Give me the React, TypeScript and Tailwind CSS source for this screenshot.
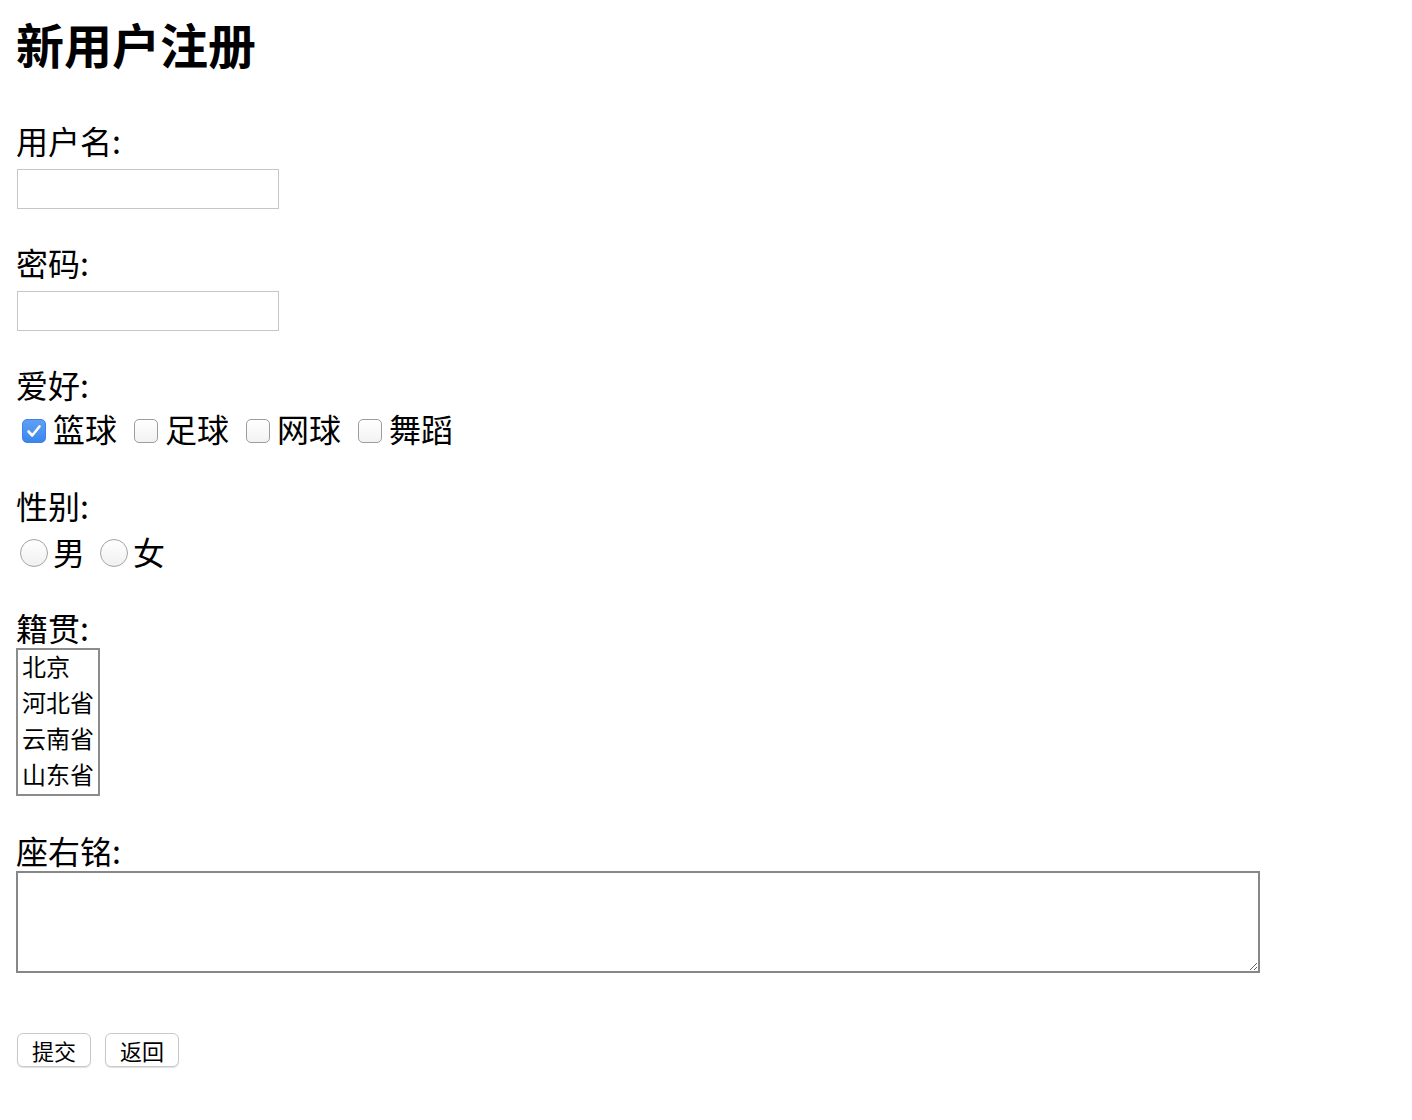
import { useState } from 'react'

const font = { fontFamily: '"Noto Sans CJK SC", "Noto Sans", sans-serif' }

const hobbies = [
  { id: 'lanqiu', label: '篮球' },
  { id: 'zuqiu', label: '足球' },
  { id: 'wangqiu', label: '网球' },
  { id: 'wudao', label: '舞蹈' },
]

const provinces = ['北京', '河北省', '云南省', '山东省']

const Label = ({ text, className = '' }: { text: string; className?: string }) => (
  <div className={`text-[32px] leading-[32px] text-black ${className}`}>{text}</div>
)

const App = () => {
  const [checked, setChecked] = useState<Record<string, boolean>>({ lanqiu: true })
  const [gender, setGender] = useState('')

  return (
    <div className="min-h-screen bg-white px-[16px] pt-[19px] text-black" style={font}>
      <h1 className="text-[48px] leading-[48px] font-bold">新用户注册</h1>

      <form className="flex flex-col items-start" onSubmit={e => e.preventDefault()}>
        {/* 用户名 */}
        <Label text="用户名:" className="mt-[57px]" />
        <input type="text" className="mt-[13px] ml-px h-[40px] w-[262px] border border-[#c6c6c6] bg-white px-2 text-[24px] outline-none" />

        {/* 密码 */}
        <Label text="密码:" className="mt-[37px]" />
        <input type="password" className="mt-[13px] ml-px h-[40px] w-[262px] border border-[#c6c6c6] bg-white px-2 text-[24px] outline-none" />

        {/* 爱好 */}
        <Label text="爱好:" className="mt-[37px]" />
        <div className="mt-[12px] flex items-center text-[32px] leading-[32px]">
          {hobbies.map((h, i) => (
            <label key={h.id} className={`flex items-center gap-[7px] ${i === 0 ? 'ml-[6px]' : 'ml-[17px]'}`}>
              <span className="relative mt-[6px] flex h-[24px] w-[24px]">
                <input
                  type="checkbox"
                  checked={!!checked[h.id]}
                  onChange={() => setChecked({ ...checked, [h.id]: !checked[h.id] })}
                  className="h-[24px] w-[24px] appearance-none rounded-[5px] border border-[#9d9d9d] bg-gradient-to-b from-white to-[#f2f2f2] checked:border-[#3d82e6] checked:from-[#5fa0f3] checked:to-[#3a86ee]"
                />
                {checked[h.id] && (
                  <svg className="pointer-events-none absolute left-0 top-0" width="24" height="24" viewBox="0 0 24 24">
                    <path d="M6.5 12.5 L10.2 16.5 L17.5 7.5" fill="none" stroke="white" strokeWidth="2.6" strokeLinecap="round" strokeLinejoin="round" />
                  </svg>
                )}
              </span>
              <span>{h.label}</span>
            </label>
          ))}
        </div>

        {/* 性别 */}
        <Label text="性别:" className="mt-[45px]" />
        <div className="mt-[13px] flex items-center text-[32px] leading-[32px]">
          {['男', '女'].map((g, i) => (
            <label key={g} className={`flex items-center gap-[5px] ${i === 0 ? 'ml-[4px]' : 'ml-[15px]'}`}>
              <input
                type="radio"
                name="gender"
                checked={gender === g}
                onChange={() => setGender(g)}
                className="mt-[5px] h-[28px] w-[28px] appearance-none rounded-full border border-[#a3a3a3] bg-gradient-to-b from-white to-[#f0f0f0]"
              />
              <span>{g}</span>
            </label>
          ))}
        </div>

        {/* 籍贯 */}
        <Label text="籍贯:" className="mt-[44px]" />
        <div className="mt-[5px] w-[84px] border-2 border-[#8c8c8c] bg-white">
          {provinces.map(p => (
            <div key={p} className="h-[36px] pl-[4px] text-[24px] leading-[32px]">{p}</div>
          ))}
        </div>

        {/* 座右铭 */}
        <Label text="座右铭:" className="mt-[38px]" />
        <textarea className="mt-[5px] h-[102px] w-[1244px] border-2 border-[#878787] bg-white p-1 text-[24px] outline-none" />

        {/* 按钮 */}
        <div className="mt-[60px] ml-px flex gap-[14px]">
          <button type="submit" className="h-[34px] w-[74px] rounded-[6px] border border-[#c9c9c9] bg-white text-[22px] leading-none shadow-[0_1px_1px_rgba(0,0,0,0.12)]">提交</button>
          <button type="button" className="h-[34px] w-[74px] rounded-[6px] border border-[#c9c9c9] bg-white text-[22px] leading-none shadow-[0_1px_1px_rgba(0,0,0,0.12)]">返回</button>
        </div>
      </form>
    </div>
  )
}

export default App
